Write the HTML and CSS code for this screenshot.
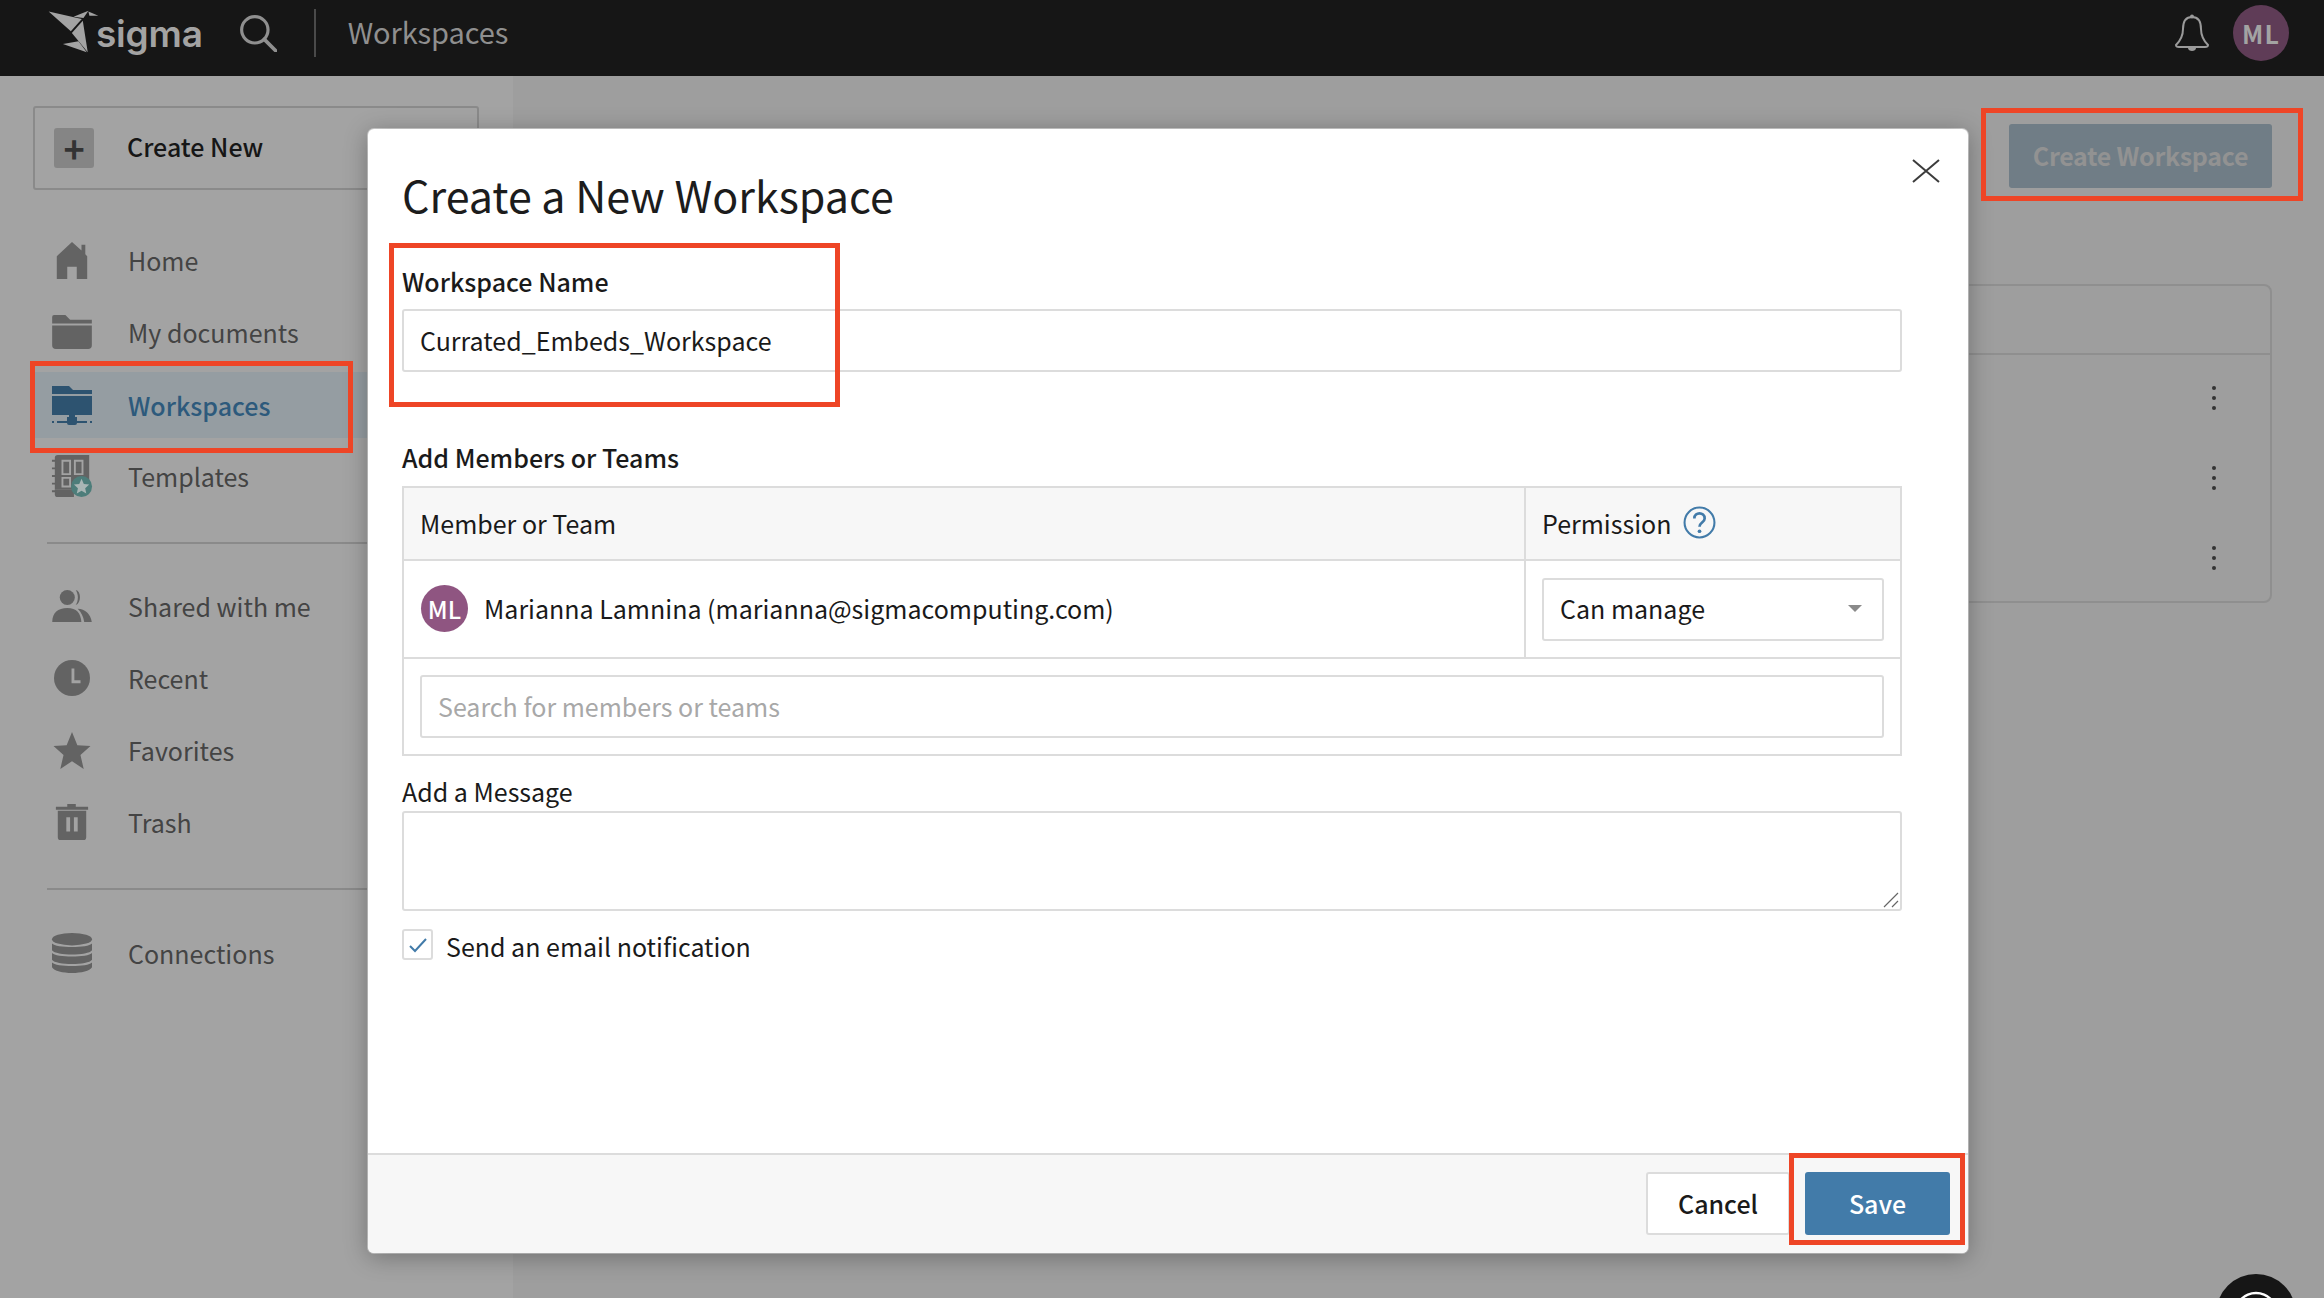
FILE: index.html
```html
<!DOCTYPE html>
<html lang="en">
<head>
    <meta charset="UTF-8">
    <title>Sigma - Workspaces</title>
    <link rel="stylesheet" href="styles.css">
</head>
<body>
    <header class="topbar">
        <svg class="logo-mark" viewBox="20 25 160 135" width="53" height="45">
            <path d="M25 32 L125 55 L92 92 Z" fill="#a3a3a3"/>
            <path d="M128 60 L143 155 L95 97 Z" fill="#a3a3a3"/>
            <path d="M68 130 L115 122 L140 155 Z" fill="#a3a3a3"/>
            <path d="M100 48 L145 30 L130 52 Z" fill="#a3a3a3"/>
            <path d="M145 32 L175 45 L148 45 Z" fill="#a3a3a3"/>
        </svg>
        <span class="logo-text">sigma</span>
        <svg class="search-icon" viewBox="0 0 36 36" width="38" height="38">
            <circle cx="15" cy="15" r="12.5" fill="none" stroke="#8f8f8f" stroke-width="3"/>
            <path d="M24 24 L35 35" stroke="#8f8f8f" stroke-width="3.5" stroke-linecap="round"/>
        </svg>
        <span class="topbar-divider"></span>
        <span class="topbar-title">Workspaces</span>
        <svg class="bell-icon" viewBox="0 0 36 38" width="36" height="40">
            <path d="M18 3 C11 3 9 9 9 15 C9 23 6 27 2 31 C2 33 3 33 5 33 L31 33 C33 33 34 33 34 31 C30 27 27 23 27 15 C27 9 25 3 18 3 Z" fill="none" stroke="#9a9a9a" stroke-width="2"/>
            <circle cx="18" cy="2.5" r="2" fill="#9a9a9a"/>
            <path d="M14 34 H22 C22 38 14 38 14 34 Z" fill="#9a9a9a"/>
        </svg>
        <span class="avatar avatar-top">ML</span>
    </header>

    <div class="layout">
        <aside class="sidebar">
            <div class="create-new">
                <span class="plus-box">+</span>
                <span class="create-label">Create New</span>
            </div>

            <nav class="nav-group first">
                <a class="nav-item">
                    <svg viewBox="0 0 36 40" width="36" height="38"><path d="M18 1 L28 10 V4 H32 V14 L34 16 V40 H23 V27 H13 V40 H2 V16 Z" fill="#636363"/></svg>
                    Home
                </a>
                <a class="nav-item">
                    <svg viewBox="0 0 42 36" width="42" height="34"><path d="M0 2 Q0 0 2 0 H14 L19 5 H42 V9 H0 Z M0 11 H42 V32 Q42 36 38 36 H4 Q0 36 0 32 Z" fill="#636363"/></svg>
                    My documents
                </a>
                <a class="nav-item active">
                    <svg viewBox="0 0 40 39" width="40" height="39">
                        <path d="M0 0 H17 L21 4 H40 V8 H0 Z M0 10 H40 V29 H0 Z" fill="#2d5370"/>
                        <path d="M17 29 H23 V31 H25 V37 Q25 39 23 39 H17 Q15 39 15 37 V31 H17 Z" fill="#2d5370"/>
                        <path d="M0 35 H2 V37 H0 Z M5 35 H35 V37 H5 Z M38 35 H40 V37 H38 Z" fill="#2d5370"/>
                    </svg>
                    Workspaces
                </a>
                <a class="nav-item">
                    <svg viewBox="0 0 44 44" width="44" height="42">
                        <path d="M4 3 Q4 0 7 0 H40 V36 H4 Z" fill="#636363"/>
                        <path d="M1 6 H5 M1 14 H5 M1 22 H5 M1 30 H5 M1 38 H5" stroke="#636363" stroke-width="2"/>
                        <path d="M12 6 H20 V20 H12 Z M25 6 H33 V20 H25 Z M12 24 H20 V33 H12 Z" fill="none" stroke="#a3a3a3" stroke-width="2"/>
                        <path d="M4 36 H24 V44 H7 Q4 44 4 41 Z" fill="#636363"/>
                        <circle cx="32" cy="33" r="11" fill="#4d7d7a"/>
                        <path d="M32 25 L34.4 30.4 L40 31 L35.8 34.8 L37 40.4 L32 37.5 L27 40.4 L28.2 34.8 L24 31 L29.6 30.4 Z" fill="#a9b6b5"/>
                    </svg>
                    Templates
                </a>
            </nav>

            <nav class="nav-group second">
                <a class="nav-item">
                    <svg viewBox="0 0 42 34" width="42" height="32">
                        <circle cx="16" cy="8" r="8" fill="#636363"/>
                        <path d="M25 0 C31 1 31 14 25 16 C28 11 28 5 25 0 Z" fill="#636363"/>
                        <path d="M0 34 C0 24 6 19 16 19 C26 19 30 24 31 34 Z" fill="#636363"/>
                        <path d="M27 20 C35 20 41 26 42 34 H34 C33 28 31 24 27 20 Z" fill="#636363"/>
                    </svg>
                    Shared with me
                </a>
                <a class="nav-item">
                    <svg viewBox="0 0 38 38" width="38" height="36">
                        <circle cx="19" cy="19" r="19" fill="#636363"/>
                        <path d="M20 9 V23 H28" fill="none" stroke="#a3a3a3" stroke-width="3"/>
                    </svg>
                    Recent
                </a>
                <a class="nav-item">
                    <svg viewBox="0 0 38 38" width="38" height="37"><path d="M19 0 L24.5 13.5 L38 14.5 L27.7 23.5 L31 38 L19 30 L7 38 L10.3 23.5 L0 14.5 L13.5 13.5 Z" fill="#636363"/></svg>
                    Favorites
                </a>
                <a class="nav-item">
                    <svg viewBox="0 0 34 38" width="34" height="36"><path d="M12 0 H21 V3 H34 V6 H0 V3 H12 Z M2 7 H32 V35 Q32 38 29 38 H5 Q2 38 2 35 Z" fill="#636363"/><path d="M11 14 H15 V29 H11 Z M19 14 H23 V29 H19 Z" fill="#a3a3a3"/></svg>
                    Trash
                </a>
            </nav>

            <nav class="nav-group third">
                <a class="nav-item">
                    <svg viewBox="0 0 42 42" width="42" height="40">
                        <ellipse cx="21" cy="6.5" rx="21" ry="6.5" fill="#636363"/>
                        <path d="M0 11 C4 16 38 16 42 11 V18 C38 24 4 24 0 18 Z M0 21 C4 26 38 26 42 21 V28 C38 34 4 34 0 28 Z M0 31 C4 36 38 36 42 31 V36 C38 44 4 44 0 36 Z" fill="#636363"/>
                    </svg>
                    Connections
                </a>
            </nav>
        </aside>

        <main class="main">
            <div class="main-actions">
                <button class="btn-create">Create Workspace</button>
            </div>
            <section class="list-card">
                <div class="list-head"></div>
                <div class="list-row"><span class="dots"><i></i><i></i><i></i></span></div>
                <div class="list-row"><span class="dots"><i></i><i></i><i></i></span></div>
                <div class="list-row"><span class="dots"><i></i><i></i><i></i></span></div>
            </section>
        </main>
    </div>

    <div class="help-bubble">
        <svg viewBox="0 0 48 48" width="48" height="48"><circle cx="24" cy="24" r="21" fill="none" stroke="#fff" stroke-width="2.5"/></svg>
    </div>

    <section class="modal">
        <div class="modal-body">
            <button class="modal-close" aria-label="Close">
                <svg viewBox="0 0 28 24" width="28" height="24"><path d="M1 1 L27 23 M27 1 L1 23" stroke="#3c3c3c" stroke-width="2"/></svg>
            </button>
            <h2>Create a New Workspace</h2>

            <label class="label-strong name-label">Workspace Name</label>
            <div class="field">Currated_Embeds_Workspace</div>

            <label class="label-strong members-label">Add Members or Teams</label>
            <div class="members">
                <div class="members-row members-head">
                    <div class="col-member">Member or Team</div>
                    <div class="col-perm">
                        Permission
                        <svg viewBox="0 0 32 32" width="33" height="33">
                            <circle cx="16" cy="16" r="14.5" fill="none" stroke="#427ba9" stroke-width="2"/>
                            <path d="M11 12 C11 5.5 21 5.5 21 12 C21 16 16 16 16 20" fill="none" stroke="#427ba9" stroke-width="2.6"/>
                            <circle cx="16" cy="24.5" r="1.8" fill="#427ba9"/>
                        </svg>
                    </div>
                </div>
                <div class="members-row member-line">
                    <div class="col-member">
                        <span class="avatar avatar-small">ML</span>
                        Marianna Lamnina (marianna@sigmacomputing.com)
                    </div>
                    <div class="col-perm">
                        <div class="select">Can manage<span class="caret"></span></div>
                    </div>
                </div>
                <div class="member-search">
                    <div class="field placeholder">Search for members or teams</div>
                </div>
            </div>

            <label class="message-label">Add a Message</label>
            <div class="textarea">
                <svg class="resize-grip" viewBox="0 0 16 16" width="16" height="16"><path d="M1 15 L15 1 M9 15 L15 9" stroke="#666" stroke-width="1.2"/></svg>
            </div>

            <div class="check-line">
                <span class="checkbox">
                    <svg viewBox="0 0 20 16" width="20" height="16"><path d="M2 9 L7 14 L18 2" fill="none" stroke="#427ba9" stroke-width="2"/></svg>
                </span>
                Send an email notification
            </div>
        </div>
        <footer class="modal-footer">
            <button class="btn btn-cancel">Cancel</button>
            <button class="btn btn-save">Save</button>
        </footer>
    </section>

    <!-- red annotation boxes drawn over the screenshot -->
    <div class="mark mark-create"></div>
    <div class="mark mark-nav"></div>
    <div class="mark mark-name"></div>
    <div class="mark mark-save"></div>
</body>
</html>
```

FILE: styles.css
```css
* {
    box-sizing: border-box;
}
html, body {
    margin: 0;
    height: 100%;
    overflow: hidden;
}
body {
    font-family: "Noto Sans CJK SC", "Open Sans", sans-serif;
    font-size: 25px;
    color: #1a1a1a;
    background-color: #9e9e9e;
}
button {
    font-family: inherit;
}

/* top bar */
.topbar {
    height: 76px;
    background-color: #161616;
    display: flex;
    align-items: center;
    padding: 0 35px 0 47px;
}
.logo-mark {
    margin-top: -14px;
}
.logo-text {
    font-family: "Inter", sans-serif;
    font-weight: 600;
    font-size: 37px;
    color: #a3a3a3;
    margin-left: -4px;
    margin-top: -10px;
    letter-spacing: -0.2px;
}
.search-icon {
    margin-left: 36px;
    margin-top: -10px;
}
.topbar-divider {
    width: 2px;
    height: 48px;
    background-color: #4a4a4a;
    margin: -11px 32px 0 37px;
}
.topbar-title {
    color: #8f8f8f;
    font-size: 29px;
    margin-top: -15px;
    letter-spacing: -0.1px;
}
.bell-icon {
    margin-left: auto;
    margin-top: -10px;
}
.avatar {
    border-radius: 50%;
    display: inline-flex;
    align-items: center;
    justify-content: center;
    font-weight: 500;
}
.avatar-top {
    width: 56px;
    height: 56px;
    background-color: #5f3c57;
    color: #a3a3a3;
    margin-left: 23px;
    margin-top: -10px;
    font-weight: 700;
    letter-spacing: 1px;
}

/* sidebar */
.layout {
    display: flex;
    height: 1222px;
}
.sidebar {
    width: 513px;
    flex-shrink: 0;
    background-color: #a3a3a3;
    padding-top: 30px;
}
.create-new {
    margin-left: 33px;
    width: 446px;
    height: 84px;
    border: 2px solid #8a8a8a;
    border-radius: 3px;
    display: flex;
    align-items: center;
    padding-left: 19px;
    gap: 33px;
    font-weight: 500;
    color: #161616;
}
.create-label {
    padding-bottom: 5px;
}
.plus-box {
    width: 40px;
    height: 40px;
    border-radius: 3px;
    background-color: #858585;
    color: #333;
    font-weight: 700;
    font-size: 36px;
    line-height: 38px;
    text-align: center;
}
.nav-group {
    margin: 0 0 0 47px;
    border-top: 2px solid #8a8a8a;
}
.nav-group.first {
    border-top: none;
    padding: 34px 0 30px;
}
.nav-group.second {
    padding: 26px 0 30px;
}
.nav-group.third {
    padding-top: 27px;
}
.nav-item {
    height: 72px;
    margin-left: -47px;
    padding-left: 50px;
    display: flex;
    align-items: center;
    color: #444;
}
.nav-item svg {
    width: 44px;
    margin-right: 34px;
    flex-shrink: 0;
}
.nav-item.active {
    height: 66px;
    margin: 4px 0 2px -14px;
    padding-left: 17px;
    background-color: #959da2;
    color: #2d5a7c;
    font-weight: 500;
}

/* main area behind the dialog */
.main {
    flex: 1;
    padding: 48px 52px 0 0;
}
.main-actions {
    display: flex;
    justify-content: flex-end;
}
.btn-create {
    width: 263px;
    height: 64px;
    border: none;
    border-radius: 3px;
    background-color: #707d86;
    color: #929292;
    font-size: 25px;
    font-weight: 700;
    padding: 0 0 2px;
    letter-spacing: -0.3px;
}
.list-card {
    margin-top: 96px;
    height: 319px;
    border: 2px solid #8f8f8f;
    border-radius: 8px;
}
.list-head {
    height: 69px;
    border-bottom: 2px solid #8f8f8f;
    margin-bottom: 3px;
}
.list-row {
    height: 80px;
    display: flex;
    align-items: center;
    justify-content: flex-end;
    padding-right: 54px;
}
.dots {
    display: flex;
    flex-direction: column;
    gap: 6px;
}
.dots i {
    width: 4px;
    height: 4px;
    border-radius: 50%;
    background-color: #333;
}
.help-bubble {
    position: absolute;
    left: 2216px;
    top: 1274px;
    width: 80px;
    height: 80px;
    border-radius: 50%;
    background-color: #161616;
    display: flex;
    align-items: center;
    justify-content: center;
}

/* dialog */
.modal {
    position: absolute;
    left: 368px;
    top: 129px;
    width: 1600px;
    height: 1124px;
    background-color: white;
    border-radius: 6px;
    box-shadow: 0 4px 24px rgba(0,0,0,0.3), 0 0 0 1px #d0d0d0;
    display: flex;
    flex-direction: column;
}
.modal-body {
    flex: 1;
    padding: 32px 66px 0 34px;
    position: relative;
}
.modal-close {
    position: absolute;
    right: 28px;
    top: 30px;
    border: none;
    padding: 0;
    background: none;
    line-height: 0;
}
.modal-body h2 {
    font-weight: 400;
    font-size: 43px;
    line-height: 66px;
    margin: 0;
    color: #1c1c1c;
}
.label-strong {
    display: block;
    font-weight: 500;
    line-height: 36px;
}
.name-label {
    margin-top: 36px;
}
.field {
    height: 63px;
    border: 2px solid #dcdcdc;
    border-radius: 3px;
    padding: 0 16px 1px;
    display: flex;
    align-items: center;
    margin-top: 10px;
}
.field.placeholder {
    color: #a8a8a8;
    margin-top: 0;
}
.members-label {
    margin-top: 67px;
}
.members {
    margin-top: 11px;
    border: 2px solid #dcdcdc;
}
.members-row {
    display: flex;
    border-bottom: 2px solid #dcdcdc;
}
.col-member {
    flex: 1;
    display: flex;
    align-items: center;
    padding: 0 0 2px 16px;
}
.col-perm {
    width: 376px;
    border-left: 2px solid #dcdcdc;
    display: flex;
    align-items: center;
    padding: 0 16px;
    gap: 12px;
}
.members-head {
    height: 73px;
    background-color: #f7f7f7;
}
.members-head .col-perm {
    padding-bottom: 2px;
}
.member-line {
    height: 98px;
}
.avatar-small {
    width: 47px;
    height: 47px;
    margin: 0 16px 0 1px;
    background-color: #8f5581;
    color: white;
    font-size: 24px;
}
.select {
    flex: 1;
    height: 63px;
    border: 2px solid #dcdcdc;
    border-radius: 3px;
    padding: 0 16px 2px;
    display: flex;
    align-items: center;
    justify-content: space-between;
}
.caret {
    width: 0;
    height: 0;
    border-left: 7px solid transparent;
    border-right: 7px solid transparent;
    border-top: 7px solid #8a8a8a;
    margin-right: 4px;
}
.member-search {
    padding: 16px;
}
.message-label {
    display: block;
    margin-top: 16px;
    margin-bottom: 1px;
    line-height: 38px;
}
.textarea {
    height: 100px;
    border: 2px solid #dcdcdc;
    border-radius: 3px;
    position: relative;
}
.resize-grip {
    position: absolute;
    right: 1px;
    bottom: 1px;
}
.check-line {
    display: flex;
    align-items: center;
    gap: 13px;
    margin-top: 17px;
}
.checkbox {
    width: 31px;
    height: 31px;
    border: 2px solid #dcdcdc;
    border-radius: 3px;
    display: flex;
    align-items: center;
    justify-content: center;
    margin-top: -3px;
}
.modal-footer {
    height: 100px;
    flex-shrink: 0;
    background-color: #f7f7f7;
    border-top: 2px solid #dcdcdc;
    border-radius: 0 0 6px 6px;
    display: flex;
    justify-content: flex-end;
    align-items: flex-start;
    padding: 17px 18px 0 0;
    gap: 15px;
}
.btn {
    height: 63px;
    border-radius: 3px;
    font-size: 25px;
    font-weight: 500;
    padding: 0 0 2px;
}
.btn-cancel {
    width: 144px;
    background-color: white;
    border: 2px solid #dcdcdc;
    color: #1a1a1a;
}
.btn-save {
    width: 145px;
    background-color: #427ba9;
    border: none;
    color: white;
}

/* red annotation boxes */
.mark {
    position: absolute;
    border: 5px solid #ee4526;
    pointer-events: none;
}
.mark-create {
    left: 1981px;
    top: 108px;
    width: 322px;
    height: 93px;
}
.mark-nav {
    left: 30px;
    top: 361px;
    width: 323px;
    height: 92px;
}
.mark-name {
    left: 389px;
    top: 243px;
    width: 451px;
    height: 164px;
}
.mark-save {
    left: 1789px;
    top: 1153px;
    width: 176px;
    height: 92px;
}
```
